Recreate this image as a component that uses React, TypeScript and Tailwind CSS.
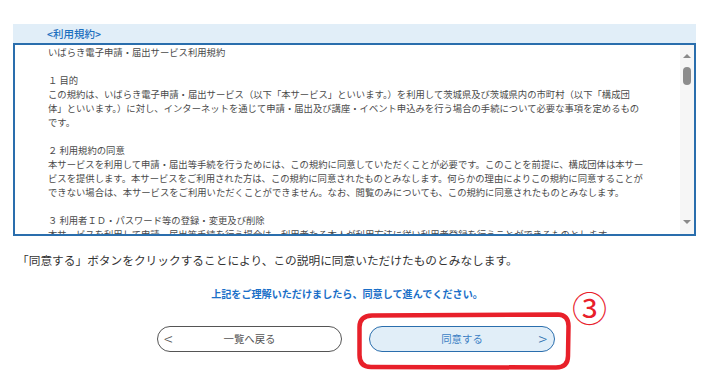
import React from 'react';

const termsLines: string[] = [
  'いばらき電子申請・届出サービス利用規約',
  '',
  '１ 目的',
  'この規約は、いばらき電子申請・届出サービス（以下「本サービス」といいます。）を利用して茨城県及び茨城県内の市町村（以下「構成団',
  '体」といいます。）に対し、インターネットを通じて申請・届出及び講座・イベント申込みを行う場合の手続について必要な事項を定めるもの',
  'です。',
  '',
  '２ 利用規約の同意',
  '本サービスを利用して申請・届出等手続を行うためには、この規約に同意していただくことが必要です。このことを前提に、構成団体は本サー',
  'ビスを提供します。本サービスをご利用された方は、この規約に同意されたものとみなします。何らかの理由によりこの規約に同意することが',
  'できない場合は、本サービスをご利用いただくことができません。なお、閲覧のみについても、この規約に同意されたものとみなします。',
  '',
  '３ 利用者ＩＤ・パスワード等の登録・変更及び削除',
  '本サービスを利用して申請・届出等手続を行う場合は、利用者たる本人が利用方法に従い利用者登録を行うことができるものとします。',
];

const ScrollBar: React.FC = () => (
  <div className="w-[14px] shrink-0 bg-[#f6f6f6] flex flex-col items-center pt-[9px] pb-[10px]">
    <div className="w-0 h-0 border-l-[4px] border-r-[4px] border-b-[4px] border-l-transparent border-r-transparent border-b-[#8a8a8a]" />
    <div className="mt-[9px] w-[8px] h-[18px] rounded-full bg-[#8c8c8c]" />
    <div className="flex-1" />
    <div className="w-0 h-0 border-l-[4px] border-r-[4px] border-t-[4px] border-l-transparent border-r-transparent border-t-[#8a8a8a]" />
  </div>
);

export default function App() {
  return (
    <div className="relative w-[719px] h-[373px] overflow-hidden bg-white font-['Noto_Sans_CJK_JP','Noto_Sans',sans-serif]">
      <div className="ml-[13px] mt-[24px] w-[683px]">
        <div className="h-[19px] bg-[#e1eef8] pl-[34px] text-[10.5px] leading-[19px] font-medium text-[#1c6fbf]">
          &lt;利用規約&gt;
        </div>
        <div className="h-[193px] border-2 border-[#2a6ead] flex">
          <div className="flex-1 overflow-hidden pl-[33px] text-[9.33px] leading-[14px] text-[#4a4a4a]">
            {termsLines.map((line, i) => (
              <p key={i} className="whitespace-nowrap h-[14px]">
                {line}
              </p>
            ))}
          </div>
          <ScrollBar />
        </div>
      </div>

      <p className="mt-[16px] pl-[17px] text-[11.7px] leading-[16px] text-[#333]">
        「同意する」ボタンをクリックすることにより、この説明に同意いただけたものとみなします。
      </p>

      <p className="mt-[19px] w-[694px] text-center text-[10.1px] leading-[14px] font-bold text-[#1b6fc8]">
        上記をご理解いただけましたら、同意して進んでください。
      </p>

      <div className="mt-[25px] pl-[157px] flex gap-[27px]">
        <button className="relative w-[185px] h-[26px] rounded-full border border-[#555] bg-white text-[10.4px] text-[#555] flex items-center justify-center">
          <span className="absolute left-[6px] top-[3px] text-[16px] leading-none font-light text-[#555]">&lt;</span>
          一覧へ戻る
        </button>
        <button className="relative w-[186px] h-[26px] rounded-full border border-[#2a6ead] bg-[#e1eef8] text-[10.4px] text-[#3b7fc4] flex items-center justify-center">
          同意する
          <span className="absolute right-[7px] top-[3px] text-[16px] leading-none font-light text-[#2a6ead]">&gt;</span>
        </button>
      </div>

      {/* annotation */}
      <svg className="absolute left-0 top-0 pointer-events-none" width="719" height="373">
        <path
          d="M 372 315.5 L 558 314.5 Q 568.5 315 568.5 326 L 568 356 Q 568 367.5 556 367.5 L 371 367 Q 359.5 367 359.5 355 L 359.5 327 Q 359.5 316 372 315.5 Z"
          fill="none"
          stroke="#e8202a"
          strokeWidth="4.5"
          strokeLinejoin="round"
        />
      </svg>
      <span className="absolute left-[572px] top-[289px] text-[35px] leading-none text-[#e8202a]">③</span>
    </div>
  );
}
